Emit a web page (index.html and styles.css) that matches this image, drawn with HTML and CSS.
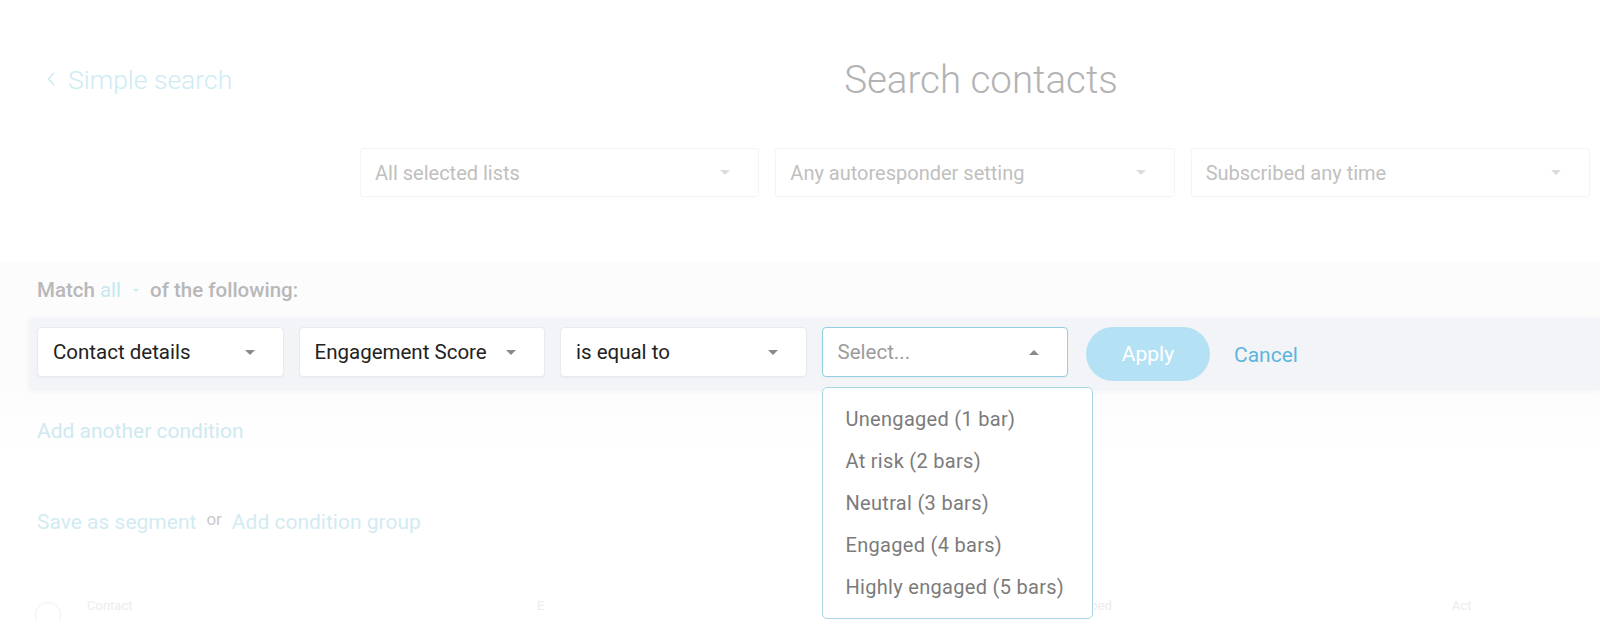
FILE: index.html
```html
<!DOCTYPE html>
<html lang="en">
<head>
<meta charset="utf-8">
<title>Search contacts</title>
<link rel="stylesheet" href="styles.css">
</head>
<body>
<div class="page">
  <header class="header">
    <a class="back-link"><svg class="chev" width="10" height="16" viewBox="0 0 10 16"><path d="M8 2 L2.5 8 L8 14" fill="none" stroke="currentColor" stroke-width="1.6"/></svg>Simple search</a>
    <h1 class="title">Search contacts</h1>
  </header>

  <div class="filters">
    <div class="filter"><span>All selected lists</span><i class="caret"></i></div>
    <div class="filter"><span>Any autoresponder setting</span><i class="caret"></i></div>
    <div class="filter"><span>Subscribed any time</span><i class="caret"></i></div>
  </div>

  <section class="conditions">
    <div class="match">Match <span class="match-all">all</span><i class="mini-caret"></i> of the following:</div>
    <div class="band">
      <div class="select"><span>Contact details</span><i class="caret dark"></i></div>
      <div class="select"><span>Engagement Score</span><i class="caret dark"></i></div>
      <div class="select"><span>is equal to</span><i class="caret dark"></i></div>
      <div class="select open">
        <span class="placeholder">Select...</span><i class="caret up"></i>
        <ul class="menu">
          <li>Unengaged (1 bar)</li>
          <li>At risk (2 bars)</li>
          <li>Neutral (3 bars)</li>
          <li>Engaged (4 bars)</li>
          <li>Highly engaged (5 bars)</li>
        </ul>
      </div>
      <button class="apply">Apply</button>
      <a class="cancel">Cancel</a>
    </div>
    <a class="add-cond">Add another condition</a>
  </section>

  <div class="save-row">
    <a class="pale">Save as segment</a><span class="or">or</span><a class="pale">Add condition group</a>
  </div>

  <div class="list-row">
    <span class="circle"></span>
    <span class="cell c1">Contact</span>
    <span class="cell c2">E</span>
    <span class="cell c3">Subscribed</span>
    <span class="cell c4">Act</span>
  </div>
</div>
</body>
</html>
```
FILE: styles.css
```css
* { box-sizing: border-box; }
html, body { margin: 0; padding: 0; }
body {
  background: #ffffff;
  font-family: Roboto, "Liberation Sans", Arial, sans-serif;
  width: 1600px;
  height: 621px;
  overflow: hidden;
}
.page { position: relative; }

.header {
  display: grid;
  grid-template-columns: 360px 1fr;
  align-items: center;
  height: 158px;
}
.back-link {
  display: flex;
  align-items: center;
  gap: 12px;
  padding-left: 46px;
  font-size: 26.5px;
  font-weight: 300;
  color: #cdebf2;
}
.chev { color: #cdebf2; }
.title {
  margin: 0;
  text-align: center;
  font-size: 38.5px;
  font-weight: 300;
  color: #b3b3b3;
  padding-left: 2px;
}

.filters {
  display: grid;
  grid-template-columns: repeat(3, 1fr);
  gap: 16px;
  margin: -10px 10px 0 360px;
}
.filter {
  height: 49px;
  border: 1px solid #f4f4f4;
  border-radius: 3px;
  box-shadow: 0 2px 4px rgba(0,0,0,0.012);
  display: flex;
  align-items: center;
  justify-content: space-between;
  padding: 0 28px 0 14px;
  font-size: 20px;
  color: #c0c0c0;
}
.caret {
  width: 0; height: 0;
  border-left: 5px solid transparent;
  border-right: 5px solid transparent;
  border-top: 5px solid #dcdcdc;
}
.caret.dark { border-top-color: #8a8a8a; }
.caret.up {
  border-top: 0;
  border-bottom: 5px solid #8a8a8a;
}

.conditions {
  margin-top: 65px;
  background: linear-gradient(#fcfcfd, #fcfcfd 65%, #ffffff);
  padding-top: 17px;
  padding-bottom: 8px;
}
.match {
  padding-left: 37px;
  font-size: 20.5px;
  font-weight: 500;
  color: #b8b8b8;
  display: flex;
  align-items: center;
  gap: 5px;
  height: 22px;
}
.match-all { color: #c8e8f0; font-weight: 400; }
.mini-caret {
  width: 0; height: 0;
  border-left: 3.5px solid transparent;
  border-right: 3.5px solid transparent;
  border-top: 3.5px solid #c8e8f0;
  margin: 0 6px 0 7px;
}

.band {
  margin: 17px 0 0 29px;
  height: 72px;
  background: #f2f4f7;
  box-shadow: 0 1px 6px rgba(30,50,80,0.05);
  border-radius: 4px 0 0 4px;
  display: flex;
  align-items: flex-start;
  padding: 9px 0 0 8px;
  gap: 15px;
}
.select {
  position: relative;
  flex: 0 0 246.5px;
  height: 50px;
  background: #ffffff;
  border: 1px solid #e8eaed;
  border-radius: 4px;
  box-shadow: 0 1px 2px rgba(0,0,0,0.04);
  display: flex;
  align-items: center;
  justify-content: space-between;
  padding: 0 28px 0 15px;
  font-size: 20.5px;
  color: #222222;
}
.select.open { border-color: #93cfe3; }
.placeholder { color: #9c9c9c; }

.menu {
  position: absolute;
  top: 59px;
  left: -1px;
  width: 271px;
  height: 232px;
  margin: 0;
  padding: 10px 0 0 0;
  list-style: none;
  background: #ffffff;
  border: 1.5px solid #a8d6e6;
  border-radius: 5px;
  z-index: 5;
}
.menu li {
  height: 42px;
  line-height: 42px;
  padding-left: 23px;
  font-size: 20px;
  letter-spacing: 0.3px;
  color: #7b7b7b;
}

.apply {
  margin-left: 3px;
  width: 124px;
  height: 54px;
  border: 0;
  border-radius: 27px;
  background: #b5e1f5;
  color: #ffffff;
  font-family: inherit;
  font-size: 21px;
}
.cancel {
  margin-left: 9px;
  align-self: center;
  margin-top: -8px;
  font-size: 21px;
  color: #5db5dd;
}

.add-cond {
  display: block;
  margin: 29px 0 0 37px;
  font-size: 21px;
  line-height: 25px;
  color: #cfe9f1;
}

.save-row {
  margin-top: 58px;
  padding-left: 37px;
  display: flex;
  align-items: baseline;
  gap: 10px;
  line-height: 25px;
}
.pale { font-size: 21px; color: #d2ebf2; }
.or { font-size: 17px; color: #c9c9c9; position: relative; top: -4px; }

.list-row {
  margin-top: 60px;
  height: 40px;
  display: flex;
  align-items: flex-start;
  font-size: 13px;
  line-height: 14px;
  color: #ececec;
}
.circle {
  margin: 6px 0 0 35px;
  flex: 0 0 26px;
  height: 26px;
  border-radius: 50%;
  border: 1.5px solid #f0f0f0;
}
.cell { position: relative; top: 3px; }
.c1 { margin-left: 26px; width: 450px; }
.c2 { width: 510px; }
.c3 { width: 405px; }
```
